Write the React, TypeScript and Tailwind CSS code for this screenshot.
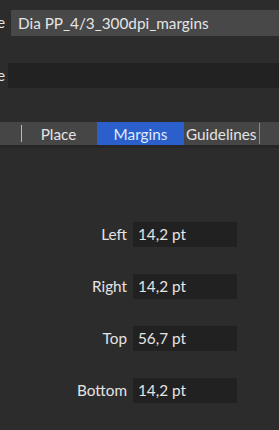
const font = { fontFamily: 'Lato, "Noto Sans", sans-serif' };

const margins = [
  { label: 'Left', value: '14,2 pt' },
  { label: 'Right', value: '14,2 pt' },
  { label: 'Top', value: '56,7 pt' },
  { label: 'Bottom', value: '14,2 pt' },
];

export default function App() {
  return (
    <div className="w-[279px] h-[430px] overflow-hidden bg-[#2c2c2c] text-[#e4e4e4] text-[15.3px]" style={font}>
      {/* name row */}
      <div className="flex items-center pt-[10px]">
        <span className="w-[11px] overflow-hidden flex justify-end pr-[6px] leading-none">e</span>
        <div className="flex-1 h-[26px] bg-[#484848] flex items-center pl-[7px]">Dia PP_4/3_300dpi_margins</div>
      </div>

      {/* second row */}
      <div className="flex items-center mt-[27px]">
        <span className="w-[8px] overflow-hidden flex justify-end pr-[3px] leading-none">e</span>
        <div className="flex-1 h-[25px] bg-[#222222]" />
      </div>

      {/* tabs */}
      <div className="mt-[34px] h-[23px] bg-[#464646] flex items-stretch">
        <div className="w-[21px]" />
        <div className="w-px my-[3px] bg-[#b8b8b8]" />
        <div className="w-[75px] flex items-center justify-center pr-[2px] pt-[2px]">Place</div>
        <div className="w-[87px] bg-[#2b5fcc] text-[#dfeaff] flex items-center justify-center pt-[2px]">Margins</div>
        <div className="w-[75px] flex items-center pl-[2px] pt-[2px]">Guidelines</div>
        <div className="w-px my-[1px] bg-[#8a8a8a]" />
      </div>
      <div className="h-[3px] bg-[#262626]" />

      {/* margin fields */}
      <div className="mt-[74px] flex flex-col gap-[27px]">
        {margins.map(m => (
          <div key={m.label} className="flex items-center">
            <span className="w-[127px] text-right">{m.label}</span>
            <div className="ml-[6px] w-[104px] h-[25px] bg-[#212121] flex items-center pl-[5px]">{m.value}</div>
          </div>
        ))}
      </div>
    </div>
  );
}
